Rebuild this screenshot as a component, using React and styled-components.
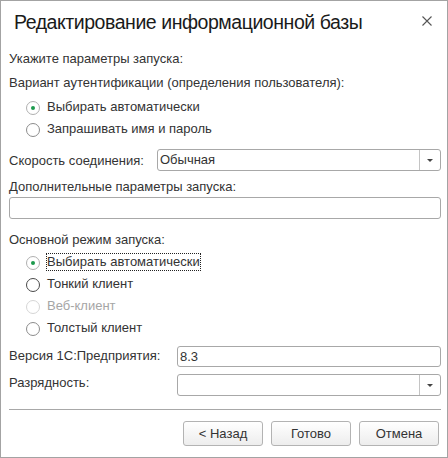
import React from "react";
import styled, { createGlobalStyle } from "styled-components";

const Global = createGlobalStyle`
  html, body { margin: 0; padding: 0; background: #fff; }
  body { font-family: "Liberation Sans", Arial, sans-serif; }
  * { box-sizing: border-box; }
`;

const Window = styled.div`
  width: 448px;
  height: 458px;
  border: 1px solid #a3a3a3;
  background: #fff;
  display: flex;
  flex-direction: column;
  font-family: "Liberation Sans", Arial, sans-serif;
  font-size: 13px;
  color: #333;
`;

const Header = styled.div`
  display: flex;
  align-items: flex-start;
  justify-content: space-between;
  padding: 9px 15px 0 13px;
`;

const Title = styled.div`
  font-size: 19.5px;
  letter-spacing: -0.45px;
  line-height: 24px;
  color: #1a1a1a;
`;

const Close = styled.button`
  margin-top: 6px;
  width: 10px;
  height: 10px;
  padding: 0;
  border: 0;
  background: none;
  display: flex;
  cursor: pointer;
`;

const Body = styled.div`
  display: flex;
  flex-direction: column;
  padding: 16px 6px 0 8px;
`;

const Label = styled.div`
  line-height: 16px;
  margin-top: ${(p) => p.$mt || 0}px;
`;

const RadioGroup = styled.div`
  display: flex;
  flex-direction: column;
  margin-top: ${(p) => p.$mt || 4}px;
  padding-left: 17px;
`;

const RadioRow = styled.label`
  display: flex;
  align-items: center;
  height: 22px;
  gap: 6px;
  color: ${(p) => (p.$disabled ? "#a6a6a6" : "#333")};
`;

const Circle = styled.span`
  width: 14px;
  height: 14px;
  margin-top: 2px;
  border-radius: 50%;
  border: 1px solid
    ${(p) => (p.$disabled ? "#d6d6d6" : p.$checked ? "#b0b0b0" : p.$dark ? "#4a4a4a" : "#8c8c8c")};
  background: #fff;
  display: flex;
  align-items: center;
  justify-content: center;
  &::after {
    content: "";
    width: 4px;
    height: 4px;
    border-radius: 50%;
    background: ${(p) => (p.$checked ? "#1d9a4d" : "transparent")};
  }
`;

const RadioText = styled.span`
  line-height: 16px;
  border: 1px ${(p) => (p.$focused ? "dotted #222" : "solid transparent")};
`;

const FieldRow = styled.div`
  display: flex;
  align-items: flex-start;
  margin-top: ${(p) => p.$mt || 0}px;
`;

const FieldLabel = styled.div`
  width: ${(p) => p.$w}px;
  flex: none;
  line-height: 17px;
  padding-top: ${(p) => p.$pt || 0}px;
`;

const Box = styled.div`
  flex: ${(p) => (p.$block ? "none" : 1)};
  height: ${(p) => p.$h || 22}px;
  margin-top: ${(p) => p.$mt || 0}px;
  border: 1px solid #a8a8a8;
  border-radius: 3px;
  background: #fff;
  display: flex;
  align-items: stretch;
`;

const BoxText = styled.div`
  flex: 1;
  padding-left: 2px;
  line-height: ${(p) => p.$lh || 20}px;
  color: #333;
`;

const DropButton = styled.div`
  width: 21px;
  border-left: 1px solid #c4c4c4;
  display: flex;
  align-items: center;
  justify-content: center;
  &::after {
    content: "";
    border-left: 3px solid transparent;
    border-right: 3px solid transparent;
    border-top: 3px solid #444;
  }
`;

const Separator = styled.div`
  height: 1px;
  background: #a8a8a8;
  margin-top: 13px;
`;

const Buttons = styled.div`
  display: flex;
  justify-content: flex-end;
  gap: 8px;
  margin-top: 11px;
  padding-right: 2px;
`;

const Button = styled.button`
  width: 80px;
  height: 25px;
  border: 1px solid #b3b3b3;
  border-radius: 3px;
  background: linear-gradient(#ffffff, #ededed);
  font-family: "Liberation Sans", Arial, sans-serif;
  font-size: 13px;
  color: #333;
  padding: 0;
  cursor: pointer;
`;

function Radio({ checked, disabled, dark, focused, children }) {
  return (
    <RadioRow $disabled={disabled}>
      <Circle $checked={checked} $disabled={disabled} $dark={dark} />
      <RadioText $focused={focused}>{children}</RadioText>
    </RadioRow>
  );
}

export default function App() {
  return (
    <>
      <Global />
      <Window>
        <Header>
          <Title>Редактирование информационной базы</Title>
          <Close aria-label="Закрыть">
            <svg width="10" height="10" viewBox="0 0 10 10">
              <path d="M0.5 0.5L9.5 9.5M9.5 0.5L0.5 9.5" stroke="#555" strokeWidth="1.1" />
            </svg>
          </Close>
        </Header>
        <Body>
          <Label $mt={1}>Укажите параметры запуска:</Label>
          <Label $mt={8}>Вариант аутентификации (определения пользователя):</Label>
          <RadioGroup $mt={5}>
            <Radio checked>Выбирать автоматически</Radio>
            <Radio>Запрашивать имя и пароль</Radio>
          </RadioGroup>
          <FieldRow $mt={9}>
            <FieldLabel $w={148} $pt={3}>Скорость соединения:</FieldLabel>
            <Box>
              <BoxText>Обычная</BoxText>
              <DropButton />
            </Box>
          </FieldRow>
          <Label $mt={8}>Дополнительные параметры запуска:</Label>
          <Box $mt={2} $block />
          <Label $mt={13}>Основной режим запуска:</Label>
          <RadioGroup $mt={3}>
            <Radio checked focused>Выбирать автоматически</Radio>
            <Radio dark>Тонкий клиент</Radio>
            <Radio disabled>Веб-клиент</Radio>
            <Radio>Толстый клиент</Radio>
          </RadioGroup>
          <FieldRow $mt={7}>
            <FieldLabel $w={168} $pt={1}>Версия 1С:Предприятия:</FieldLabel>
            <Box $h={21}>
              <BoxText $lh={19}>8.3</BoxText>
            </Box>
          </FieldRow>
          <FieldRow $mt={7}>
            <FieldLabel $w={168}>Разрядность:</FieldLabel>
            <Box>
              <BoxText />
              <DropButton />
            </Box>
          </FieldRow>
          <Separator />
          <Buttons>
            <Button>&lt; Назад</Button>
            <Button>Готово</Button>
            <Button>Отмена</Button>
          </Buttons>
        </Body>
      </Window>
    </>
  );
}
